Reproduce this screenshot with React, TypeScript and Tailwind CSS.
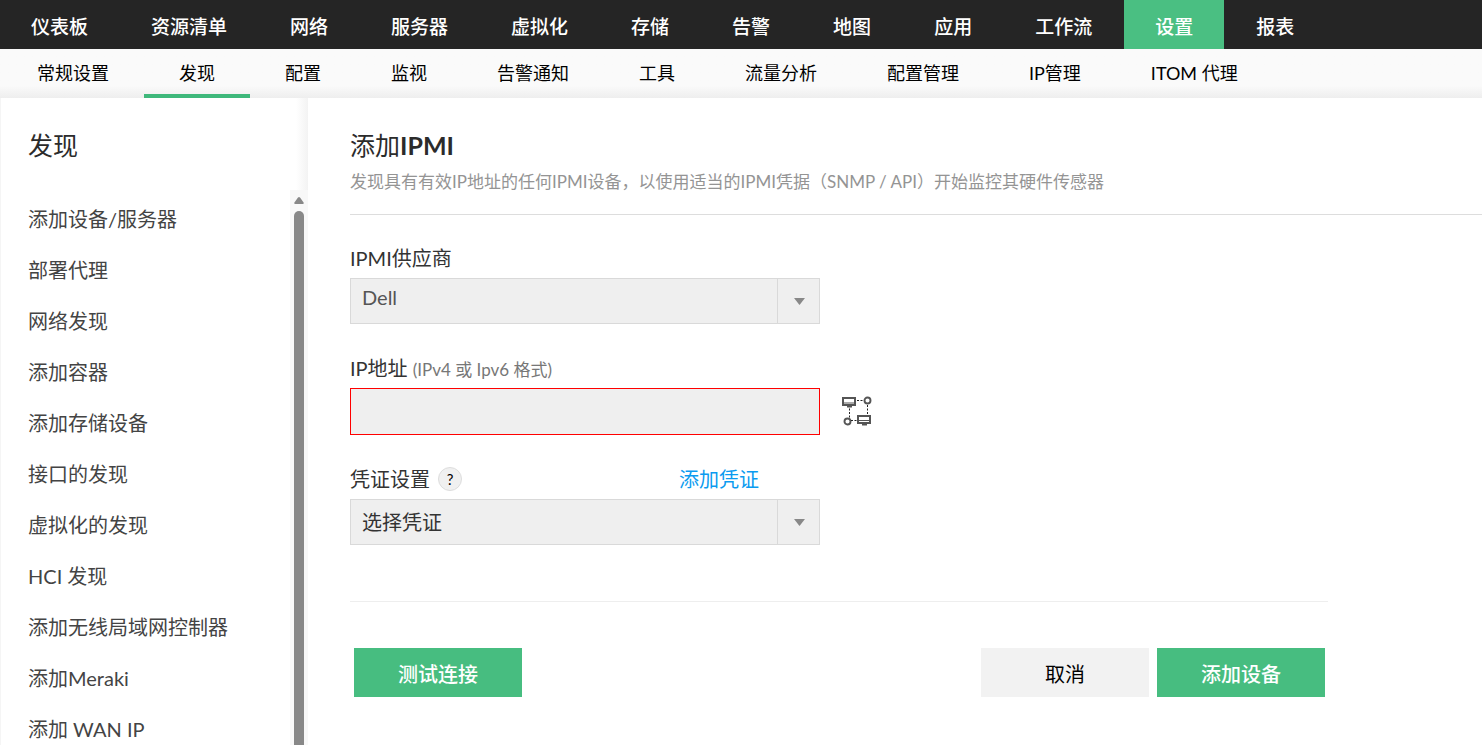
import { useState } from 'react'
import clsx from 'clsx'

const mainTabs = ['仪表板', '资源清单', '网络', '服务器', '虚拟化', '存储', '告警', '地图', '应用', '工作流', '设置', '报表']

const subTabs = ['常规设置', '发现', '配置', '监视', '告警通知', '工具', '流量分析', '配置管理', 'IP管理', 'ITOM 代理']

const sideLinks = [
    '添加设备/服务器',
    '部署代理',
    '网络发现',
    '添加容器',
    '添加存储设备',
    '接口的发现',
    '虚拟化的发现',
    'HCI 发现',
    '添加无线局域网控制器',
    '添加Meraki',
    '添加 WAN IP',
]

const TopNav = () => (
    <nav className="flex h-[49px] shrink-0 gap-px bg-[#252525] text-[19px] font-medium text-white">
        {mainTabs.map((tab) => (
            <a
                key={tab}
                href="#"
                className={clsx('flex items-center whitespace-nowrap px-[31px] pt-1.5', tab === '设置' && 'bg-[#4abf82]')}
            >
                {tab}
            </a>
        ))}
    </nav>
)

const SubNav = () => (
    <nav className="flex h-[49px] shrink-0 bg-linear-to-b from-[#fafafa] from-75% to-[#eeeeee] pl-0.5 text-[18px] text-black">
        {subTabs.map((tab) => (
            <a
                key={tab}
                href="#"
                className={clsx(
                    'flex items-center whitespace-nowrap border-b-4 px-[35px] pt-1',
                    tab === '发现' ? 'border-[#3fb87b]' : 'border-transparent'
                )}
            >
                {tab}
            </a>
        ))}
    </nav>
)

const Sidebar = () => (
    <aside className="flex w-[308px] shrink-0 flex-col border-l border-[#f5f5f5] bg-linear-to-l from-[#f3f3f3] to-white to-[12px]">
        <h2 className="h-[92px] shrink-0 pl-[27px] pt-[27px] text-[25px] leading-10 text-[#2b2b2b]">发现</h2>
        <div className="flex min-h-0 flex-1">
            <ul className="flex-1 overflow-hidden pl-[27px] pt-1 text-[20px] leading-[51px] text-[#444]">
                {sideLinks.map((link) => (
                    <li key={link}>
                        <a href="#" className="block whitespace-nowrap">{link}</a>
                    </li>
                ))}
            </ul>
            {/* Scrollbar */}
            <div className="flex w-[18px] flex-col items-center bg-[#f8f8f8]">
                <svg className="mt-[7px] h-[7px] w-[10px] shrink-0" viewBox="0 0 10 7" fill="#888">
                    <path d="M4 0.6Q5 -0.4 6 0.6L9.6 5.6Q10 7 9 7H1Q0 7 0.4 5.6Z" />
                </svg>
                <div className="mt-[7px] w-[10px] flex-1 rounded-t-full bg-[#888]"></div>
            </div>
        </div>
    </aside>
)

type DropdownProps = {
    id: string
    options: string[]
    className?: string
}

const Dropdown = ({ id, options, className }: DropdownProps) => (
    <div className="relative w-[470px]">
        <select
            id={id}
            className={clsx('block h-[46px] w-full appearance-none border border-[#d9d9d9] bg-[#efefef] pl-[11px] pr-12 text-[20px] outline-none', className)}
        >
            {options.map((option) => (
                <option key={option}>{option}</option>
            ))}
        </select>
        <span className="pointer-events-none absolute inset-y-0 right-0 flex w-[43px] items-center justify-center border-l border-[#d9d9d9]">
            <svg className="h-[7px] w-[11px]" viewBox="0 0 11 7" fill="#888">
                <path d="M0 0H11L5.5 7Z" />
            </svg>
        </span>
    </div>
)

const IpRangeIcon = () => (
    <svg className="h-[31px] w-[30px]" viewBox="0 0 30 31" fill="none" stroke="#555">
        <path d="M1 2H13V9H1Z" strokeWidth="2" />
        <path d="M1 7H13" strokeWidth="1" />
        <path d="M5 10.5H10" strokeWidth="2" />
        <path d="M16 20H28V27H16Z" strokeWidth="2" />
        <path d="M16 24.5H28" strokeWidth="1" />
        <path d="M20 28.5H25" strokeWidth="2" />
        <circle cx="25.5" cy="4.5" r="3" strokeWidth="1.9" />
        <circle cx="5.5" cy="25.5" r="3" strokeWidth="1.9" />
        <path d="M15 4.5H22M7.5 12.5V22M25.5 9V19M9 24.5H15" stroke="#222" strokeWidth="1" strokeDasharray="2 1.5" />
    </svg>
)

const AddIpmiForm = () => {
    const [ip, setIp] = useState('')

    return (
        <form className="flex flex-col" onSubmit={(e) => e.preventDefault()}>
            <label htmlFor="vendor" className="mt-[23px] text-[20px] leading-10 text-[#333]">IPMI供应商</label>
            <Dropdown id="vendor" options={['Dell', 'HP', 'Lenovo']} className="pb-2 text-[#555]" />

            <label htmlFor="ip" className="mt-6 text-[20px] leading-10 text-[#333]">
                IP地址 <span className="text-[17px] leading-none text-[#777]">(IPv4 或 Ipv6 格式)</span>
            </label>
            <div className="flex items-center gap-[22px]">
                <input
                    id="ip"
                    type="text"
                    value={ip}
                    onChange={(e) => setIp(e.target.value)}
                    className="h-[47px] w-[470px] border border-[#f00] bg-[#efefef] px-3 text-[20px] text-[#333] outline-none"
                />
                <button type="button" aria-label="IP">
                    <IpRangeIcon />
                </button>
            </div>

            <div className="mt-6 flex h-10 w-[409px] items-center text-[20px] leading-10">
                <label htmlFor="credential" className="text-[#333]">凭证设置</label>
                <button type="button" className="ml-2 h-6 w-6 rounded-full border border-[#ddd] bg-[#f0f0f0] text-[15px] leading-5 text-black">
                    ?
                </button>
                <a href="#" className="ml-auto text-[#0b9bf0]">添加凭证</a>
            </div>
            <Dropdown id="credential" options={['选择凭证']} className="text-[#333]" />

            <div className="mr-[154px] mt-14 flex border-t border-[#eee] pl-1 pr-[3px] pt-[46px] text-[20px]">
                <button type="button" className="h-[49px] w-[168px] bg-[#47bd80] pt-0.5 font-medium text-white">测试连接</button>
                <button type="button" className="ml-auto h-[49px] w-[168px] bg-[#f2f2f2] pt-0.5 text-black">取消</button>
                <button type="submit" className="ml-2 h-[49px] w-[168px] bg-[#47bd80] pt-0.5 font-medium text-white">添加设备</button>
            </div>
        </form>
    )
}

export default function App() {
    return (
        <div lang="zh-CN" className="flex h-screen flex-col overflow-hidden bg-white font-['Lato','Noto_Sans_CJK_SC',sans-serif]">
            <TopNav />
            <SubNav />
            <div className="flex min-h-0 flex-1">
                <Sidebar />
                <main className="min-w-0 flex-1 pl-[42px] pt-[27px]">
                    <header className="border-b border-[#ddd] pb-4">
                        <h1 className="text-[25px] leading-10 text-[#2b2b2b]">
                            添加<b>IPMI</b>
                        </h1>
                        <p className="text-[17px] leading-[33px] text-[#949494]">
                            发现具有有效IP地址的任何IPMI设备，以使用适当的IPMI凭据（SNMP / API）开始监控其硬件传感器
                        </p>
                    </header>
                    <AddIpmiForm />
                </main>
            </div>
        </div>
    )
}
